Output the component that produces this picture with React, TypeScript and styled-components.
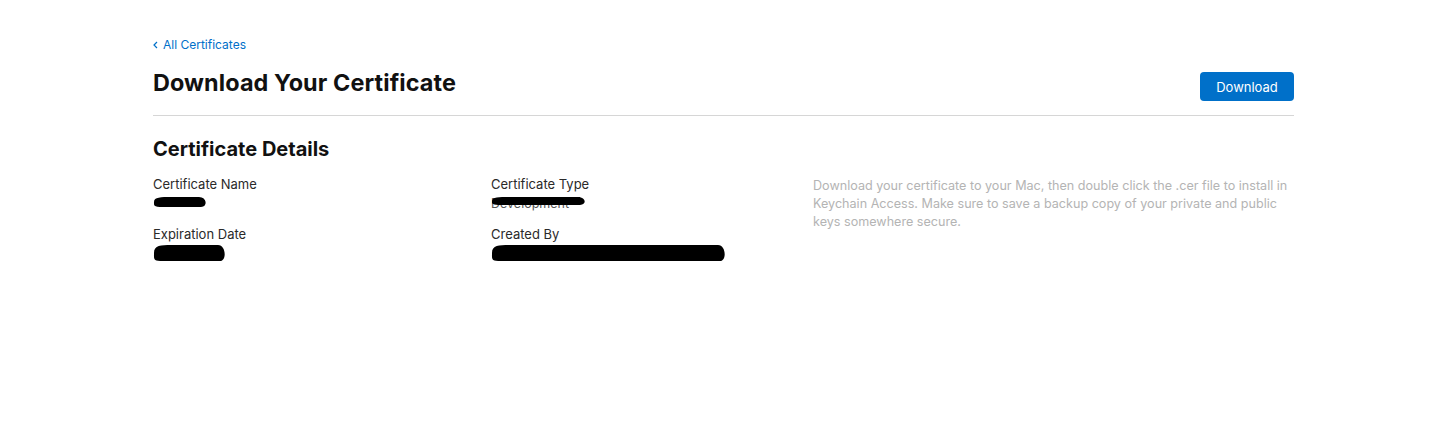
import * as React from 'react';
import styled, { createGlobalStyle } from 'styled-components';

const GlobalStyle = createGlobalStyle`
  body {
    margin: 0;
    background: #fff;
    font-family: Inter, 'Noto Sans', 'Liberation Sans', sans-serif;
    color: #111;
  }
`;

const Page = styled.main`
  width: 1141px;
  padding: 33px 0 0 153px;
`;

const BackLink = styled.a`
  display: inline-flex;
  align-items: center;
  gap: 5px;
  font-size: 12px;
  line-height: 16px;
  color: #0070c9;
  text-decoration: none;
`;

const Header = styled.div`
  display: flex;
  justify-content: space-between;
  align-items: flex-end;
  padding: 15px 0 14px;
  border-bottom: 1px solid #d6d6d6;
`;

const Title = styled.h1`
  margin: 0 0 3px;
  font-size: 23.4px;
  line-height: 30px;
  font-weight: 700;
  letter-spacing: 0.1px;
`;

const Button = styled.button`
  width: 94px;
  height: 29px;
  border: none;
  border-radius: 4px;
  background: #0070c9;
  color: #fff;
  font-family: inherit;
  font-size: 13px;
  padding: 0;
`;

const SectionTitle = styled.h2`
  margin: 20px 0 13px;
  font-size: 20px;
  line-height: 26px;
  font-weight: 700;
`;

const Grid = styled.div`
  display: grid;
  grid-template-columns: 338px 322px 481px;
`;

const Column = styled.div`
  display: flex;
  flex-direction: column;
  gap: 12px;
`;

const Field = styled.div`
  display: flex;
  flex-direction: column;
  gap: 2px;
`;

const Label = styled.div`
  font-size: 13px;
  line-height: 18px;
  color: #2a2a2a;
`;

const Value = styled.div`
  position: relative;
  height: 18px;
  font-size: 12.5px;
  line-height: 18px;
  color: #555;
`;

const Redaction = styled.svg`
  position: absolute;
  left: -2px;
  top: 0;
`;

const Help = styled.p`
  margin: 0;
  padding-top: 2px;
  font-size: 12.6px;
  line-height: 18px;
  color: #b4b4b4;
`;

function Scribble({ w, h, y, text }: { w: number; h: number; y: number; text?: string }) {
  return (
    <Value>
      {text}
      <Redaction width={w + 4} height={30} viewBox={`0 0 ${w + 4} 30`}>
        <path
          d={`M3 ${y + h / 2} C 3 ${y}, 10 ${y}, 20 ${y} L ${w - 6} ${y} C ${w + 2} ${y}, ${w + 3} ${y + h}, ${w - 4} ${y + h} L 12 ${y + h} C 2 ${y + h}, 3 ${y + h - 2}, 3 ${y + h / 2} Z`}
          fill="#000"
        />
      </Redaction>
    </Value>
  );
}

export default function App() {
  return (
    <>
      <GlobalStyle />
      <Page>
        <BackLink href="#">
          <svg width="5" height="8" viewBox="0 0 5 8">
            <path d="M4 1 L1 4 L4 7" stroke="#0070c9" strokeWidth="1.2" fill="none" />
          </svg>
          All Certificates
        </BackLink>
        <Header>
          <Title>Download Your Certificate</Title>
          <Button>Download</Button>
        </Header>
        <SectionTitle>Certificate Details</SectionTitle>
        <Grid>
          <Column>
            <Field>
              <Label>Certificate Name</Label>
              <Scribble w={54} h={10} y={2} />
            </Field>
            <Field>
              <Label>Expiration Date</Label>
              <Scribble w={73} h={16} y={0} />
            </Field>
          </Column>
          <Column>
            <Field>
              <Label>Certificate Type</Label>
              <Scribble w={95} h={8} y={2} text="Development" />
            </Field>
            <Field>
              <Label>Created By</Label>
              <Scribble w={235} h={16} y={0} />
            </Field>
          </Column>
          <Help>
            Download your certificate to your Mac, then double click the .cer file to install in
            Keychain Access. Make sure to save a backup copy of your private and public keys
            somewhere secure.
          </Help>
        </Grid>
      </Page>
    </>
  );
}
